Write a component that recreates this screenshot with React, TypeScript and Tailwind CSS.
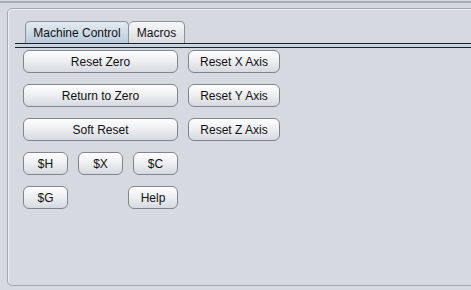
import React, { useState } from 'react';

const font = { fontFamily: '"Liberation Sans", Arial, sans-serif' };

const Btn: React.FC<{ label: string; w: string }> = ({ label, w }) => (
    <button
        className={`${w} h-[23px] rounded-[6px] border border-[#80848c] bg-linear-to-b from-[#fefefe] via-[#eceef1] to-[#d6d9de] text-[12px] text-[#111111] shadow-[inset_0_1px_0_#ffffff]`}
    >
        {label}
    </button>
);

const App: React.FC = () => {
    const [tab, setTab] = useState<'machine' | 'macros'>('machine');

    return (
        <div className="w-[471px] h-[290px] bg-[#d6d9df] overflow-hidden" style={font}>
            <div className="mt-[1px] h-[2px] bg-[#a9adb4]" />
            <div className="ml-[7px] mt-[5px] w-[480px] h-[278px] rounded-[5px] border border-[#a3a7ae] shadow-[inset_1px_1px_0_#eef0f3] bg-[#d6d9df]">
                <div className="pt-[12px] pl-[7px]">
                    <div className="flex items-end pl-[10px] h-[22px]">
                        <button
                            onClick={() => setTab('machine')}
                            className={`w-[104px] h-[22px] rounded-t-[5px] border border-b-0 border-[#8b8f97] text-[12px] text-[#111111] ${tab === 'machine' ? 'bg-linear-to-b from-[#e4eaf0] to-[#b9cbdc]' : 'bg-linear-to-b from-[#f6f7f8] to-[#d9dce1]'}`}
                        >
                            Machine Control
                        </button>
                        <button
                            onClick={() => setTab('macros')}
                            className={`w-[56px] h-[22px] rounded-t-[5px] border border-b-0 border-l-0 border-[#8b8f97] text-[12px] text-[#111111] ${tab === 'macros' ? 'bg-linear-to-b from-[#e4eaf0] to-[#b9cbdc]' : 'bg-linear-to-b from-[#f6f7f8] to-[#d9dce1]'}`}
                        >
                            Macros
                        </button>
                    </div>
                    <div className="h-[5px] border-t border-b border-[#1c2330] bg-[#c9d4df]" />
                </div>
                {tab === 'machine' && (
                    <div className="pl-[15px] pt-[2px] flex flex-col gap-[11px]">
                        <div className="flex gap-[10px]">
                            <Btn label="Reset Zero" w="w-[155px]" />
                            <Btn label="Reset X Axis" w="w-[92px]" />
                        </div>
                        <div className="flex gap-[10px]">
                            <Btn label="Return to Zero" w="w-[155px]" />
                            <Btn label="Reset Y Axis" w="w-[92px]" />
                        </div>
                        <div className="flex gap-[10px]">
                            <Btn label="Soft Reset" w="w-[155px]" />
                            <Btn label="Reset Z Axis" w="w-[92px]" />
                        </div>
                        <div className="flex gap-[10px]">
                            <Btn label="$H" w="w-[45px]" />
                            <Btn label="$X" w="w-[45px]" />
                            <Btn label="$C" w="w-[45px]" />
                        </div>
                        <div className="flex gap-[60px]">
                            <Btn label="$G" w="w-[45px]" />
                            <Btn label="Help" w="w-[50px]" />
                        </div>
                    </div>
                )}
            </div>
        </div>
    );
};

export default App;
